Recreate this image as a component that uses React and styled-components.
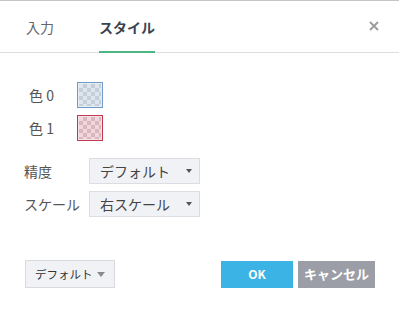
import styled, { createGlobalStyle } from 'styled-components';

const GlobalStyle = createGlobalStyle`
    html, body {
        margin: 0;
        padding: 0;
        background: #fff;
    }
    body {
        font-family: "Noto Sans CJK JP", "Noto Sans", sans-serif;
    }
`

const Dialog = styled.div`
    width: 399px;
    height: 314px;
    box-sizing: border-box;
    border-top: 1px solid #c4c4c4;
    display: flex;
    flex-direction: column;
    background: #fff;
`

const Header = styled.div`
    display: flex;
    align-items: stretch;
    height: 52px;
    box-sizing: border-box;
    border-bottom: 1px solid #dedede;
    padding: 0 20px 0 26px;
    gap: 45px;
`

const Tab = styled.div`
    display: flex;
    align-items: center;
    font-size: 14px;
    font-weight: ${p => p.$active ? 700 : 400};
    color: ${p => p.$active ? '#3b4350' : '#666'};
    border-bottom: 2px solid ${p => p.$active ? '#4eb584' : 'transparent'};
    margin-bottom: -1px;
    padding-top: 2px;
`

const Close = styled.div`
    margin-left: auto;
    display: flex;
    align-items: center;
    padding-bottom: 2px;
`

const Body = styled.div`
    flex: 1;
    display: flex;
    flex-direction: column;
    padding-top: 29px;
`

const ColorList = styled.div`
    display: flex;
    flex-direction: column;
    gap: 7px;
    padding-left: 29px;
`

const Row = styled.div`
    display: flex;
    align-items: center;
`

const Label = styled.span`
    width: ${p => p.$w}px;
    font-size: 14px;
    color: #555;
`

const Swatch = styled.div`
    width: 26px;
    height: 26px;
    box-sizing: border-box;
    border: 1px solid ${p => p.$border};
    padding: 1px;
    background: ${p => p.$ring};
`

const Checker = styled.div`
    width: 100%;
    height: 100%;
    background: repeating-conic-gradient(${p => p.$dark} 0 25%, ${p => p.$light} 0 50%) 0 0 / 8px 8px;
`

const SelectList = styled.div`
    display: flex;
    flex-direction: column;
    gap: 7px;
    padding-left: 24px;
    margin-top: 17px;
`

const Select = styled.div`
    width: 111px;
    height: 26px;
    box-sizing: border-box;
    background: #f1f2f5;
    border: 1px solid #dcdde3;
    display: flex;
    align-items: center;
    justify-content: space-between;
    padding: 0 7px 0 10px;
    font-size: 14px;
    color: #444;
`

const Arrow = styled.span`
    width: 0;
    height: 0;
    border-left: ${p => p.$size || 3.5}px solid transparent;
    border-right: ${p => p.$size || 3.5}px solid transparent;
    border-top: ${p => (p.$size || 3.5) + 0.5}px solid ${p => p.$color || '#555'};
`

const Footer = styled.div`
    display: flex;
    align-items: center;
    padding: 0 24px 26px 25px;
`

const DefaultButton = styled.div`
    width: 90px;
    height: 28px;
    box-sizing: border-box;
    background: #f1f2f5;
    border: 1px solid #d9dadf;
    display: flex;
    align-items: center;
    justify-content: space-between;
    padding: 0 9px 0 9px;
    font-size: 11.5px;
    color: #333;
`

const Actions = styled.div`
    margin-left: auto;
    display: flex;
    gap: 5px;
`

const Button = styled.div`
    width: ${p => p.$w}px;
    height: 27px;
    background: ${p => p.$bg};
    color: #fff;
    font-weight: 700;
    font-size: ${p => p.$fs}px;
    display: flex;
    align-items: center;
    justify-content: center;
    padding-bottom: 2px;
    box-sizing: border-box;
`

const colors = [
    { label: '色 0', border: '#6f9bc6', ring: '#e6edf5', light: '#dde5ee', dark: '#c6ced8' },
    { label: '色 1', border: '#c2394f', ring: '#f6e2e6', light: '#f2d6dc', dark: '#d8b8bf' },
]

const selects = [
    { label: '精度', value: 'デフォルト' },
    { label: 'スケール', value: '右スケール' },
]

const App = () => {
    return (
        <Dialog>
            <GlobalStyle />
            <Header>
                <Tab>入力</Tab>
                <Tab $active>スタイル</Tab>
                <Close>
                    <svg width="10" height="10" viewBox="0 0 10 10">
                        <path d="M1 1 L9 9 M9 1 L1 9" stroke="#9a9a9a" strokeWidth="1.8" />
                    </svg>
                </Close>
            </Header>
            <Body>
                <ColorList>
                    {colors.map(c => (
                        <Row key={c.label}>
                            <Label $w={48}>{c.label}</Label>
                            <Swatch $border={c.border} $ring={c.ring}>
                                <Checker $light={c.light} $dark={c.dark} />
                            </Swatch>
                        </Row>
                    ))}
                </ColorList>
                <SelectList>
                    {selects.map(s => (
                        <Row key={s.label}>
                            <Label $w={65}>{s.label}</Label>
                            <Select>
                                {s.value}
                                <Arrow />
                            </Select>
                        </Row>
                    ))}
                </SelectList>
            </Body>
            <Footer>
                <DefaultButton>
                    デフォルト
                    <Arrow $color="#8a8a8a" $size={4.5} />
                </DefaultButton>
                <Actions>
                    <Button $w={72} $bg="#3bb3e4" $fs={12}>OK</Button>
                    <Button $w={77} $bg="#9b9ea6" $fs={13}>キャンセル</Button>
                </Actions>
            </Footer>
        </Dialog>
    )
}

export default App;
